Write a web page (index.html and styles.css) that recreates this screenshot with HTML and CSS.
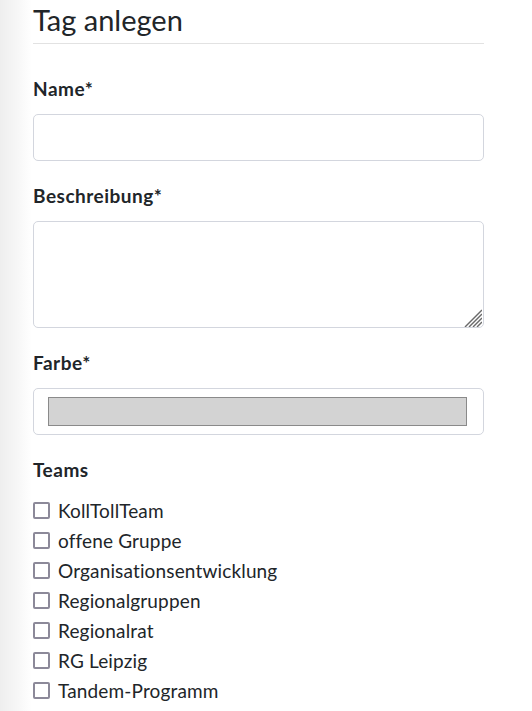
FILE: index.html
```html
<!DOCTYPE html>
<html lang="de">
<head>
<meta charset="utf-8">
<title>Tag anlegen</title>
<link rel="stylesheet" href="styles.css">
</head>
<body>
<main class="page">
  <h1 class="title">Tag anlegen</h1>
  <form class="form">
    <div class="field">
      <label class="label" for="name">Name*</label>
      <input class="control" id="name" type="text">
    </div>
    <div class="field">
      <label class="label" for="desc">Beschreibung*</label>
      <div class="area-wrap">
        <textarea class="control area" id="desc"></textarea>
        <svg class="grip" width="18" height="18" viewBox="0 0 18 18" aria-hidden="true">
          <line x1="1" y1="18" x2="18" y2="1"/>
          <line x1="5" y1="18" x2="18" y2="5"/>
          <line x1="9" y1="18" x2="18" y2="9"/>
          <line x1="13" y1="18" x2="18" y2="13"/>
        </svg>
      </div>
    </div>
    <div class="field">
      <label class="label" for="color">Farbe*</label>
      <input class="control color" id="color" type="color" value="#d3d3d3">
    </div>
    <div class="field">
      <div class="label">Teams</div>
      <ul class="checks">
        <li class="check"><span class="box"></span>KollTollTeam</li>
        <li class="check"><span class="box"></span>offene Gruppe</li>
        <li class="check"><span class="box"></span>Organisationsentwicklung</li>
        <li class="check"><span class="box"></span>Regionalgruppen</li>
        <li class="check"><span class="box"></span>Regionalrat</li>
        <li class="check"><span class="box"></span>RG Leipzig</li>
        <li class="check"><span class="box"></span>Tandem-Programm</li>
      </ul>
    </div>
  </form>
</main>
</body>
</html>
```
FILE: styles.css
```css
html, body {
  margin: 0;
  padding: 0;
}
body {
  font-family: Lato, "Liberation Sans", sans-serif;
  color: #212529;
  background: linear-gradient(to right, #eeeeee 0, #f7f7f7 18px, #ffffff 32px);
  min-height: 711px;
}
.page {
  width: 451px;
  margin-left: 33px;
}
.title {
  margin: 2px 0 0;
  font-size: 29px;
  line-height: 35px;
  font-weight: 400;
  padding-bottom: 6px;
  border-bottom: 1px solid #e2e2e2;
}
.form {
  margin-top: 33px;
}
.field {
  margin-bottom: 23px;
}
.label {
  display: block;
  font-size: 19px;
  line-height: 24px;
  font-weight: 700;
  letter-spacing: 0.5px;
  margin-bottom: 13px;
}
.control {
  display: block;
  box-sizing: border-box;
  width: 100%;
  height: 47px;
  border: 1px solid #d3d6de;
  border-radius: 5px;
  background: #fff;
  margin: 0;
  font: inherit;
}
.area-wrap {
  position: relative;
}
.area {
  height: 107px;
  resize: none;
}
.grip {
  position: absolute;
  right: 2px;
  bottom: 1px;
  stroke: #6a6a6a;
  stroke-width: 1.4;
}
.color {
  padding: 8px 16px 8px 14px;
  -webkit-appearance: none;
  appearance: none;
  cursor: pointer;
}
.color::-webkit-color-swatch-wrapper {
  padding: 0;
}
.color::-webkit-color-swatch {
  border: 1px solid #8a8a8a;
  border-radius: 0;
}
.checks {
  list-style: none;
  margin: 0;
  padding: 0;
}
.check {
  display: flex;
  align-items: center;
  gap: 8px;
  height: 30px;
  font-size: 19px;
  letter-spacing: 0.15px;
}
.box {
  box-sizing: border-box;
  width: 17px;
  height: 17px;
  border: 2px solid #8c8999;
  border-radius: 2px;
  flex: none;
}
```
